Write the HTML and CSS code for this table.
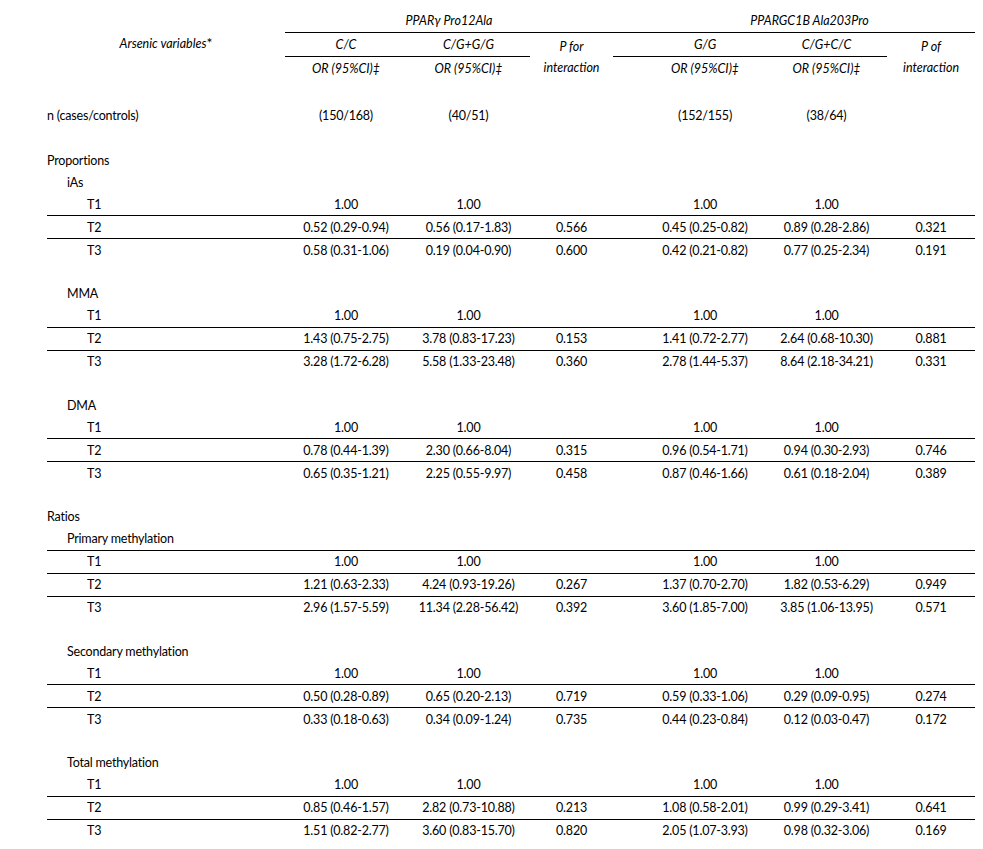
FILE: index.html
```html
<!DOCTYPE html>
<html>
<head>
<meta charset="utf-8">
<link rel="stylesheet" href="styles.css">
</head>
<body>
<table class="tbl">
  <colgroup>
    <col class="c-label"><col class="c-or1"><col class="c-or2"><col class="c-p1"><col class="c-sp"><col class="c-or3"><col class="c-or4"><col class="c-p2">
  </colgroup>
  <thead>
    <tr class="h1">
      <th rowspan="3" class="hl">Arsenic variables<span class="mark">*</span></th>
      <th colspan="3" class="hg">PPARγ Pro12Ala</th>
      <th class="hg"></th>
      <th colspan="3" class="hg">PPARGC1B Ala203Pro</th>
    </tr>
    <tr class="h2">
      <th class="bt">C/C</th>
      <th class="bt">C/G+G/G</th>
      <th rowspan="2" class="bt pint">P for<br>interaction</th>
      <th class="bt"></th>
      <th class="bt">G/G</th>
      <th class="bt">C/G+C/C</th>
      <th rowspan="2" class="bt pint">P of<br>interaction</th>
    </tr>
    <tr class="h3">
      <th class="bt">OR (95%CI)‡</th>
      <th class="bt">OR (95%CI)‡</th>
      <th class="bt"></th>
      <th class="bt">OR (95%CI)‡</th>
      <th class="bt">OR (95%CI)‡</th>
    </tr>
  </thead>
  <tbody>
    <tr class="blank b-head"><td colspan="8"></td></tr>
    <tr><td class="l0">n (cases/controls)</td><td>(150/168)</td><td>(40/51)</td><td></td><td></td><td>(152/155)</td><td>(38/64)</td><td></td></tr>
    <tr class="blank b-n"><td colspan="8"></td></tr>

    <tr><td class="l0" colspan="8">Proportions</td></tr>
    <tr><td class="l1" colspan="8">iAs</td></tr>
    <tr><td class="l2">T1</td><td>1.00</td><td>1.00</td><td></td><td></td><td>1.00</td><td>1.00</td><td></td></tr>
    <tr class="rb"><td class="l2">T2</td><td>0.52 (0.29-0.94)</td><td>0.56 (0.17-1.83)</td><td>0.566</td><td></td><td>0.45 (0.25-0.82)</td><td>0.89 (0.28-2.86)</td><td>0.321</td></tr>
    <tr class="rb"><td class="l2">T3</td><td>0.58 (0.31-1.06)</td><td>0.19 (0.04-0.90)</td><td>0.600</td><td></td><td>0.42 (0.21-0.82)</td><td>0.77 (0.25-2.34)</td><td>0.191</td></tr>
    <tr class="blank"><td colspan="8"></td></tr>

    <tr><td class="l1" colspan="8">MMA</td></tr>
    <tr><td class="l2">T1</td><td>1.00</td><td>1.00</td><td></td><td></td><td>1.00</td><td>1.00</td><td></td></tr>
    <tr class="rb"><td class="l2">T2</td><td>1.43 (0.75-2.75)</td><td>3.78 (0.83-17.23)</td><td>0.153</td><td></td><td>1.41 (0.72-2.77)</td><td>2.64 (0.68-10.30)</td><td>0.881</td></tr>
    <tr class="rb"><td class="l2">T3</td><td>3.28 (1.72-6.28)</td><td>5.58 (1.33-23.48)</td><td>0.360</td><td></td><td>2.78 (1.44-5.37)</td><td>8.64 (2.18-34.21)</td><td>0.331</td></tr>
    <tr class="blank"><td colspan="8"></td></tr>

    <tr><td class="l1" colspan="8">DMA</td></tr>
    <tr><td class="l2">T1</td><td>1.00</td><td>1.00</td><td></td><td></td><td>1.00</td><td>1.00</td><td></td></tr>
    <tr class="rb"><td class="l2">T2</td><td>0.78 (0.44-1.39)</td><td>2.30 (0.66-8.04)</td><td>0.315</td><td></td><td>0.96 (0.54-1.71)</td><td>0.94 (0.30-2.93)</td><td>0.746</td></tr>
    <tr class="rb"><td class="l2">T3</td><td>0.65 (0.35-1.21)</td><td>2.25 (0.55-9.97)</td><td>0.458</td><td></td><td>0.87 (0.46-1.66)</td><td>0.61 (0.18-2.04)</td><td>0.389</td></tr>
    <tr class="blank"><td colspan="8"></td></tr>

    <tr><td class="l0" colspan="8">Ratios</td></tr>
    <tr><td class="l1" colspan="8">Primary methylation</td></tr>
    <tr class="rb"><td class="l2">T1</td><td>1.00</td><td>1.00</td><td></td><td></td><td>1.00</td><td>1.00</td><td></td></tr>
    <tr class="rb"><td class="l2">T2</td><td>1.21 (0.63-2.33)</td><td>4.24 (0.93-19.26)</td><td>0.267</td><td></td><td>1.37 (0.70-2.70)</td><td>1.82 (0.53-6.29)</td><td>0.949</td></tr>
    <tr class="rb"><td class="l2">T3</td><td>2.96 (1.57-5.59)</td><td>11.34 (2.28-56.42)</td><td>0.392</td><td></td><td>3.60 (1.85-7.00)</td><td>3.85 (1.06-13.95)</td><td>0.571</td></tr>
    <tr class="blank"><td colspan="8"></td></tr>

    <tr><td class="l1" colspan="8">Secondary methylation</td></tr>
    <tr><td class="l2">T1</td><td>1.00</td><td>1.00</td><td></td><td></td><td>1.00</td><td>1.00</td><td></td></tr>
    <tr class="rb"><td class="l2">T2</td><td>0.50 (0.28-0.89)</td><td>0.65 (0.20-2.13)</td><td>0.719</td><td></td><td>0.59 (0.33-1.06)</td><td>0.29 (0.09-0.95)</td><td>0.274</td></tr>
    <tr class="rb"><td class="l2">T3</td><td>0.33 (0.18-0.63)</td><td>0.34 (0.09-1.24)</td><td>0.735</td><td></td><td>0.44 (0.23-0.84)</td><td>0.12 (0.03-0.47)</td><td>0.172</td></tr>
    <tr class="blank"><td colspan="8"></td></tr>

    <tr><td class="l1" colspan="8">Total methylation</td></tr>
    <tr><td class="l2">T1</td><td>1.00</td><td>1.00</td><td></td><td></td><td>1.00</td><td>1.00</td><td></td></tr>
    <tr class="rb"><td class="l2">T2</td><td>0.85 (0.46-1.57)</td><td>2.82 (0.73-10.88)</td><td>0.213</td><td></td><td>1.08 (0.58-2.01)</td><td>0.99 (0.29-3.41)</td><td>0.641</td></tr>
    <tr class="rb"><td class="l2">T3</td><td>1.51 (0.82-2.77)</td><td>3.60 (0.83-15.70)</td><td>0.820</td><td></td><td>2.05 (1.07-3.93)</td><td>0.98 (0.32-3.06)</td><td>0.169</td></tr>
  </tbody>
</table>
</body>
</html>
```
FILE: styles.css
```css
html, body {
  margin: 0;
  padding: 0;
  background: #ffffff;
}
body {
  padding: 8px 0 0 47px;
  font-family: "Lato", "Liberation Sans", sans-serif;
  font-size: 12.5px;
  color: #000;
}
.tbl {
  border-collapse: separate;
  border-spacing: 0;
  table-layout: fixed;
  width: 928px;
}
.c-label { width: 238px; }
.c-or1 { width: 122px; }
.c-or2 { width: 123px; }
.c-p1 { width: 83px; }
.c-sp { width: 31px; }
.c-or3 { width: 122px; }
.c-or4 { width: 121px; }
.c-p2 { width: 88px; }

th {
  font-weight: normal;
  font-style: italic;
  font-size: 12.5px;
  padding: 0;
  text-align: center;
  vertical-align: middle;
  white-space: nowrap;
}
.h1 th { height: 24px; }
.h2 th { height: 23px; }
.h3 th { height: 23px; }
.hl { text-align: center; padding-bottom: 4px; }
.mark { font-size: 14px; font-style: normal; }
.pint { line-height: 21px; }
.bt { border-top: 1px solid #000; }

td {
  padding: 0;
  height: 22px;
  text-align: center;
  vertical-align: middle;
  white-space: nowrap;
  letter-spacing: -0.2px;
}
.blank td { height: 21.6px; }
.b-head td { height: 24px; }
.b-n td { height: 23px; }
td.l0 { text-align: left; padding-left: 0; }
td.l1 { text-align: left; padding-left: 20px; }
td.l2 { text-align: left; padding-left: 40px; }
.rb td { border-top: 1px solid #000; }
```
